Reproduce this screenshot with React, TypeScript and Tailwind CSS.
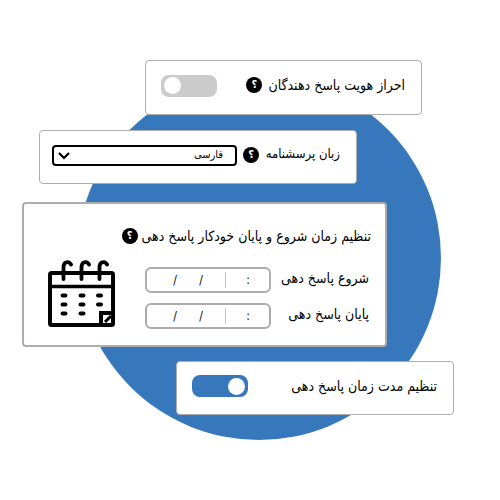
import React from "react";

function Help({ label }: { label: string }) {
  return (
    <button
      type="button"
      aria-label={label}
      className="flex size-4 shrink-0 items-center justify-center rounded-full bg-black text-[11px] leading-4 font-bold text-white"
    >
      ؟
    </button>
  );
}

function Toggle({ id, on = false }: { id: string; on?: boolean }) {
  return (
    <input
      id={id}
      type="checkbox"
      role="switch"
      defaultChecked={on}
      className="flex h-[22px] w-14 shrink-0 appearance-none items-center justify-end rounded-lg bg-[#cbcbcb] px-[3px] before:size-[17px] before:rounded-full before:bg-white checked:justify-start checked:bg-[#3777bc]"
    />
  );
}

const part = "w-4 min-w-0 bg-transparent text-center outline-none";

function DateTimeRow({ label }: { label: string }) {
  return (
    <div role="group" aria-label={label} className="flex items-center justify-between">
      <span className="pb-1 whitespace-nowrap">{label}</span>
      <div
        dir="ltr"
        className="flex h-[26px] w-[126px] items-center rounded-md border-2 border-[#adadad] pl-2 text-xs"
      >
        <input aria-label="سال" className={part} />
        <span className="w-2 text-center">/</span>
        <input aria-label="ماه" className={part} />
        <span className="w-3 text-center">/</span>
        <input aria-label="روز" className={part} />
        <span className="mr-1 ml-0.5 h-4 w-px bg-[#c4c4c4]" />
        <input aria-label="ساعت" className={part} />
        <span className="w-1 text-center">:</span>
        <input aria-label="دقیقه" className={part} />
      </div>
    </div>
  );
}

function Calendar() {
  return (
    <svg viewBox="0 0 68 68" className="size-[68px] shrink-0" fill="none" stroke="#000" strokeWidth="4" aria-hidden="true">
      <rect x="2" y="13" width="63" height="52" rx="1.5" />
      <path d="M2 26.500h63" strokeWidth="3.500" />
      <path d="M15.500 19V7.500c0-6.500 5.500-6.500 7.500-3M33.500 19V7.500c0-6.500 5.500-6.500 7.500-3M51.500 19V7.500c0-6.500 5.500-6.500 7.500-3" strokeLinecap="round" strokeWidth="3.800" />
      <path
        d="M14.500 35.500h3M32.500 35.500h3M50 35.500h3M14.500 44.500h3M32.500 44.500h3M50 44.500h3M14.500 53.500h3M32.500 53.500h3"
        strokeLinecap="round"
      />
      <path d="M53 66V53h12.500" />
      <path d="M57 62l6-6" strokeWidth="3" />
    </svg>
  );
}

const card = "relative rounded border border-[#adadad] bg-white";

export default function App() {
  return (
    <main
      dir="rtl"
      className="relative mx-auto min-h-screen max-w-[500px] bg-white pt-[60px] font-['DejaVu_Sans_Condensed','DejaVu_Sans',sans-serif] text-sm leading-5 text-black"
    >
      <div className="absolute top-[76px] left-[77px] size-[364px] rounded-full bg-[#3777bc]" />

      <section className={`${card} mr-[78px] flex h-[55px] w-[277px] items-center justify-between pr-4 pb-1 pl-[15px]`}>
        <div className="flex items-center gap-1.5 pb-0.5">
          <label htmlFor="identity" className="whitespace-nowrap">احراز هویت پاسخ دهندگان</label>
          <Help label="راهنمای احراز هویت" />
        </div>
        <Toggle id="identity" />
      </section>

      <section className={`${card} mt-[15px] mr-[143px] flex h-[54px] w-[318px] items-center justify-between pr-4 pb-1 pl-3`}>
        <label htmlFor="language" className="pb-0.5 text-[13px] whitespace-nowrap">زبان پرسشنامه</label>
        <div className="flex items-center gap-1.5">
          <Help label="راهنمای زبان" />
          <div className="relative">
            <select
              id="language"
              className="block h-[21px] w-[185px] appearance-none rounded-sm border-2 border-black bg-white pr-3 text-[11px] leading-4"
            >
              <option>فارسی</option>
            </select>
            <svg viewBox="0 0 12 8" className="pointer-events-none absolute top-[7px] left-1.5 h-2 w-3" fill="none" stroke="#000" strokeWidth="2.2" aria-hidden="true">
              <path d="M1 1l5 5 5-5" />
            </svg>
          </div>
        </div>
      </section>

      <section className={`${card} mt-[18px] mr-[113px] h-[145px] w-[365px] border-2 pt-[22px] pr-3.5 pl-6`}>
        <div className="flex items-center gap-1">
          <h2 className="whitespace-nowrap">تنظیم زمان شروع و پایان خودکار پاسخ دهی</h2>
          <Help label="راهنمای زمان بندی" />
        </div>
        <div className="mt-3.5 flex items-start justify-between">
          <div className="mt-[7px] mr-0.5 flex w-[224px] flex-col gap-2.5">
            <DateTimeRow label="شروع پاسخ دهی" />
            <DateTimeRow label="پایان پاسخ دهی" />
          </div>
          <Calendar />
        </div>
      </section>

      <section className={`${card} mt-3.5 mr-[46px] flex h-[54px] w-[278px] items-center justify-between pr-4 pb-1 pl-[15px]`}>
        <label htmlFor="duration" className="whitespace-nowrap">تنظیم مدت زمان پاسخ دهی</label>
        <Toggle id="duration" on />
      </section>
    </main>
  );
}
